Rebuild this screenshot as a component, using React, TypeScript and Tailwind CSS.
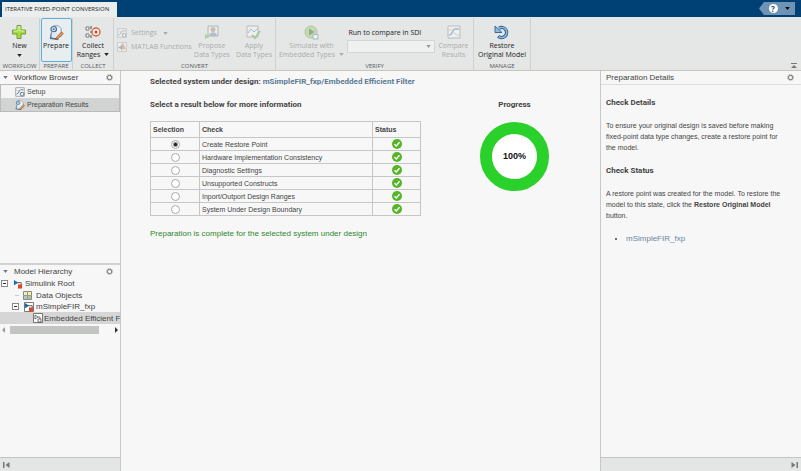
import { useState, type ReactNode } from "react";

const ribbonFont = "font-['Open_Sans','Liberation_Sans',sans-serif]";
const headingFont = "font-['Roboto','Liberation_Sans',sans-serif] font-bold";

function Caret({ className = "" }: { className?: string }) {
  return (
    <svg viewBox="0 0 6 4" className={`h-[3px] w-[5px] shrink-0 ${className}`} aria-hidden="true">
      <path d="M0 0h6L3 4z" fill="currentColor" />
    </svg>
  );
}

function PlusIcon() {
  return (
    <svg viewBox="0 0 14 14" className="size-[14px]" aria-hidden="true">
      <path d="M5 .5h4V5h4.500v4H9v4.500H5V9H.5V5H5z" fill="#a5dc3c" stroke="#6a8f3a" strokeWidth=".9" />
      <path d="M6 1.500h2V6h4.500M6 1.500V6H1.500" fill="none" stroke="#dcf5a4" strokeWidth="1" />
    </svg>
  );
}

function PrepareIcon({ className = "size-[15px]" }: { className?: string }) {
  return (
    <svg viewBox="0 0 16 16" className={className} aria-hidden="true">
      <path d="M5 .8h5l3 3V12H5z" fill="#e9f0f6" stroke="#7d93a8" strokeWidth=".9" />
      <circle cx="5" cy="4.500" r="2.900" fill="#dce8f2" stroke="#47709a" strokeWidth="1.300" />
      <circle cx="5" cy="4.500" r="1" fill="#47709a" />
      <path d="M3 8l-1 6 8 1" fill="none" stroke="#47709a" strokeWidth="2" />
      <path d="M3 8l-.5 5 7 1.500 1-5-4-2z" fill="#dfe9f1" />
      <path d="M7.500 13.800l5.800-6.300 2 1.700-5.800 5.500-2.500.8z" fill="#eda24a" stroke="#8a4a2c" strokeWidth=".8" />
    </svg>
  );
}

function CollectIcon() {
  return (
    <svg viewBox="0 0 16 14" className="h-[14px] w-4" aria-hidden="true">
      <path d="M1 2h3v3H1zM1 9h3v3H1z" fill="#fff" stroke="#777" />
      <path d="M6 1v3M6 6v2M6 10v3" stroke="#666" strokeWidth="1.2" />
      <circle cx="11" cy="7" r="4" fill="#fdf3ec" stroke="#d4683a" strokeWidth="1.4" />
      <circle cx="11" cy="7" r="1.5" fill="#b8502a" />
    </svg>
  );
}

function WaveIcon({ className = "size-[14px]", gear = false }: { className?: string; gear?: boolean }) {
  return (
    <svg viewBox="0 0 14 14" className={className} aria-hidden="true">
      <path d="M1 1h12v12H1z" fill="#fafafa" stroke="#858b90" />
      <path d="M2 10c4 0 3-6 6-6h4" fill="none" stroke="#4f7ea6" strokeWidth="1.3" />
      <path d="M2 5h3l4 5h4" fill="none" stroke="#b09a86" strokeWidth=".8" />
      {gear && <circle cx="10" cy="10" r="2.6" fill="#e8eef3" stroke="#5c7386" strokeWidth="1.3" />}
    </svg>
  );
}

function MatlabIcon() {
  return (
    <svg viewBox="0 0 12 12" className="size-[10px]" aria-hidden="true">
      <path d="M.5.5h11v11H.5z" fill="#f4f4f4" stroke="#999" />
      <path d="M1 7l3-2 3-4-1 8-2-1z" fill="#4b7fae" />
      <path d="M7 1l4 8-3-1-3 3z" fill="#df7b32" />
    </svg>
  );
}

function ProposeIcon() {
  return (
    <svg viewBox="0 0 15 15" className="size-[15px]" aria-hidden="true">
      <path d="M4 1h10v10H4z" fill="#f6f6f6" stroke="#777" />
      <circle cx="9" cy="4.500" r="2.500" fill="#a78c78" />
      <path d="M5 11c0-5 8-5 8 0z" fill="#7c90a4" />
      <path d="M1 14V9l5 2.500z" fill="#6fb83a" />
    </svg>
  );
}

function ApplyIcon() {
  return (
    <svg viewBox="0 0 15 15" className="size-[15px]" aria-hidden="true">
      <path d="M1 1h11v11H1z" fill="#f8f8f8" stroke="#888" />
      <path d="M2 8l3-4 3 3 4-4" fill="none" stroke="#5d88ac" />
      <path d="M6 10l3 3 5-7" fill="none" stroke="#68a63a" strokeWidth="2" />
    </svg>
  );
}

function SimulateIcon() {
  return (
    <svg viewBox="0 0 15 15" className="size-[15px]" aria-hidden="true">
      <circle cx="7" cy="7" r="6" fill="#9fd06a" stroke="#6c9a46" />
      <path d="M5 3.500v7L10.500 7z" fill="#3f5a2e" />
      <path d="M9 9.500h5v4.500H9z" fill="#fff" stroke="#5f7f9a" />
    </svg>
  );
}

function RestoreIcon() {
  return (
    <svg viewBox="0 0 16 16" className="size-4" aria-hidden="true">
      <path d="M5 4.200a5 5 0 1 1-.8 8" fill="none" stroke="#2f5f8e" strokeWidth="3.400" />
      <path d="M1 2v6.500h7z" fill="#8fbce0" stroke="#2f5f8e" strokeWidth=".9" />
      <path d="M4.400 4.700a5 5 0 1 1 .4 7.900" fill="none" stroke="#8fbce0" strokeWidth="1.600" />
    </svg>
  );
}

function ModelIcon({ boxed = false }: { boxed?: boolean }) {
  return (
    <svg viewBox="0 0 11 11" className="size-[10px] shrink-0" aria-hidden="true">
      {boxed && <path d="M.5.5h10v10H.5z" fill="#fff" stroke="#666" />}
      <path d="M1 1l5 3-5 3z" fill="#1b6fa8" />
      <path d="M5 4h4v3" fill="none" stroke="#555" />
      <path d="M5.500 6h4.500v4.500H5.500z" fill="#d8492a" />
    </svg>
  );
}

function DataObjectsIcon() {
  return (
    <svg viewBox="0 0 9 9" className="size-[9px] shrink-0" aria-hidden="true">
      <path d="M.5.5h8v8h-8z" fill="#f3f0a8" stroke="#888" />
      <path d="M5 5h3v3H5z" fill="#a9c98a" />
      <path d="M1 5h3v3H1z" fill="#a9c4dc" />
      <path d="M4.500 0v9M0 4.500h9" stroke="#999" />
    </svg>
  );
}

function SubsystemIcon() {
  return (
    <svg viewBox="0 0 10 10" className="size-[10px] shrink-0" aria-hidden="true">
      <path d="M.5.5h9v9h-9z" fill="#fff" stroke="#777" />
      <path d="M2 2l3 2-3 2z" fill="none" stroke="#555" strokeWidth=".8" />
      <path d="M5 4h2v2M5 6h3v3H5z" fill="none" stroke="#555" strokeWidth=".8" />
    </svg>
  );
}

function CheckMark() {
  return (
    <svg viewBox="0 0 10 10" className="mx-auto block size-[10px]" role="img" aria-label="Passed">
      <circle cx="5" cy="5" r="5" fill="#55b526" />
      <path d="M2.500 5.200l1.800 1.800 3.200-3.800" fill="none" stroke="#fff" strokeWidth="1.400" />
    </svg>
  );
}

function Section({ title, className = "", children }: { title: string; className?: string; children: ReactNode }) {
  return (
    <section className={`flex shrink-0 flex-col border-r border-[#cfd1d1] ${className}`}>
      <div className="flex flex-1 items-start justify-center">{children}</div>
      <h2 className="text-center text-[6px] leading-[8px] text-[#55595c]">{title}</h2>
    </section>
  );
}

type ToolProps = { icon: ReactNode; lines: string[]; menu?: boolean; disabled?: boolean; active?: boolean; className?: string };

function Tool({ icon, lines, menu, disabled, active, className = "" }: ToolProps) {
  const split = menu && lines.length === 1;
  return (
    <button
      type="button"
      disabled={disabled}
      className={`flex h-11 flex-col items-center rounded-[2px] border pt-1 text-[7px] leading-[9px] whitespace-nowrap ${
        active ? "border-[#5aaee0] bg-[#e8eeef]" : "border-transparent"
      } ${disabled ? "text-[#a9acac]" : "text-[#222]"} ${className}`}
    >
      <span className={`flex h-[18px] items-center ${disabled ? "opacity-45" : ""}`}>{icon}</span>
      {lines.map((line, i) => (
        <span key={line} className="flex items-center gap-1">
          {line}
          {menu && !split && i === lines.length - 1 && <Caret />}
        </span>
      ))}
      {split && <Caret className="mt-1" />}
    </button>
  );
}

function GearButton({ label }: { label: string }) {
  return (
    <button type="button" aria-label={label} className="ml-auto">
      <svg viewBox="0 0 8 8" className="size-[7px]" aria-hidden="true">
        <circle cx="4" cy="4" r="2.500" fill="#fff" stroke="#8a8a8a" strokeWidth="1.400" />
        <circle cx="4" cy="4" r="3.600" fill="none" stroke="#999" strokeWidth=".8" strokeDasharray="1.400 1.400" />
      </svg>
    </button>
  );
}

function PanelHeader({ title }: { title: string }) {
  return (
    <div className="flex h-[13px] items-center pr-[7px] pl-[3px] text-[#777]">
      <Caret />
      <h2 className="ml-1.5 text-[#444]">{title}</h2>
      <GearButton label={`${title} options`} />
    </div>
  );
}

function Toggle({ label }: { label: string }) {
  return (
    <button
      type="button"
      aria-label={label}
      className="flex size-[7px] shrink-0 items-center justify-center border border-[#888] bg-white"
    >
      <span className="h-px w-[3px] bg-[#333]" />
    </button>
  );
}

function Arrow({ left = false, bar = false }: { left?: boolean; bar?: boolean }) {
  return (
    <svg viewBox="0 0 7 6" className={`h-[6px] w-[7px] ${left ? "" : "rotate-180"}`} aria-hidden="true">
      <path d={bar ? "M0 0h1.500v6H0zM6.500 0v6L2.500 3z" : "M5 0v6L2 3z"} fill="currentColor" />
    </svg>
  );
}

const checks = [
  "Create Restore Point",
  "Hardware Implementation Consistency",
  "Diagnostic Settings",
  "Unsupported Constructs",
  "Inport/Outport Design Ranges",
  "System Under Design Boundary",
];

export default function App() {
  const [selected, setSelected] = useState(0);

  return (
    <div className="flex min-h-screen flex-col bg-[#f7f7f7] font-['Liberation_Sans',Arial,sans-serif] text-[8px] leading-[11px] text-[#444]">
      <header className={`flex h-[17px] items-end justify-between bg-[#004175] ${ribbonFont}`}>
        <h1 className="ml-0.5 flex h-[15px] w-[115px] items-center bg-[#eceeee] pl-[3px] text-[6px] whitespace-nowrap text-[#222]">
          ITERATIVE FIXED-POINT CONVERSION
        </h1>
        <button
          type="button"
          aria-label="Help"
          className="mr-1.5 mb-0.5 flex h-[13px] w-9 items-center justify-center gap-[7px] bg-[#6f93b4] pl-1 text-black [clip-path:polygon(5px_0,100%_0,100%_100%,5px_100%,0_50%)]"
        >
          <span className="flex size-[9px] items-center justify-center rounded-full bg-white text-[8px] font-bold text-[#1d4f7c]">
            ?
          </span>
          <Caret />
        </button>
      </header>

      <div className={`flex h-[54px] border-b border-[#c9c4bc] bg-[#e5e7e7] pt-px ${ribbonFont}`}>
        <Section title="WORKFLOW" className="w-10">
          <Tool icon={<PlusIcon />} lines={["New"]} menu />
        </Section>
        <Section title="PREPARE" className="w-[33px]">
          <Tool icon={<PrepareIcon />} lines={["Prepare"]} active className="w-[31px]" />
        </Section>
        <Section title="COLLECT" className="w-[41px]">
          <Tool icon={<CollectIcon />} lines={["Collect", "Ranges"]} menu />
        </Section>
        <Section title="CONVERT" className="w-[162px]">
          <div className="mr-auto flex flex-col gap-1 pt-2.5 pl-[3px] leading-[10px] text-[7px] text-[#a9acac]">
            <button type="button" disabled className="flex items-center gap-1">
              <span className="opacity-45">
                <WaveIcon className="size-[10px]" gear />
              </span>
              Settings
              <Caret className="ml-0.5" />
            </button>
            <button type="button" disabled className="flex items-center gap-1 whitespace-nowrap">
              <span className="opacity-45">
                <MatlabIcon />
              </span>
              MATLAB Functions
            </button>
          </div>
          <Tool icon={<ProposeIcon />} lines={["Propose", "Data Types"]} disabled />
          <Tool icon={<ApplyIcon />} lines={["Apply", "Data Types"]} disabled className="mr-0.5 ml-1" />
        </Section>
        <Section title="VERIFY" className="w-[198px]">
          <Tool icon={<SimulateIcon />} lines={["Simulate with", "Embedded Types"]} menu disabled className="w-[70px]" />
          <div className="flex w-[88px] flex-col gap-0.5 pt-2.5">
            <label htmlFor="sdi" className="px-0.5 text-[7px] leading-[10px] text-[#222]">
              Run to compare in SDI
            </label>
            <div className="relative">
              <select
                id="sdi"
                disabled
                className="block h-[13px] w-full appearance-none border border-[#d3d5d5] bg-[#eff0f0]"
              >
                <option aria-label="None" />
              </select>
              <Caret className="pointer-events-none absolute top-[5px] right-1 text-[#999]" />
            </div>
          </div>
          <Tool icon={<WaveIcon />} lines={["Compare", "Results"]} disabled className="w-[38px]" />
        </Section>
        <Section title="MANAGE" className="w-[57px]">
          <Tool icon={<RestoreIcon />} lines={["Restore", "Original Model"]} />
        </Section>
        <button type="button" aria-label="Collapse toolstrip" className="mt-auto mr-1 mb-px ml-auto text-[#777]">
          <svg viewBox="0 0 6 6" className="size-[6px]" aria-hidden="true">
            <path d="M0 0h6v1H0zM3 2l3 3H0z" fill="currentColor" />
          </svg>
        </button>
      </div>

      <div className="flex flex-1">
        <aside className="flex w-[121px] shrink-0 flex-col border-r border-[#c8c8c8]">
          <div className="flex flex-1 flex-col">
            <PanelHeader title="Workflow Browser" />
            <nav className="border border-[#bbb] text-[7px]">
              <a href="#setup" className="flex h-[13px] items-center gap-0.5 bg-[#f4f4f4] pl-3.5">
                <WaveIcon className="size-[10px]" gear />
                Setup
              </a>
              <a href="#results" className="flex h-[13px] items-center gap-0.5 bg-[#d2d4d3] pl-3.5">
                <PrepareIcon className="size-[10px]" />
                Preparation Results
              </a>
            </nav>
          </div>
          <div className="flex h-[194px] flex-col border-t-2 border-[#d2d2d2]">
            <PanelHeader title="Model Hierarchy" />
            <ul className="whitespace-nowrap">
              <li className="flex h-[11px] items-center gap-[3px] pl-px">
                <Toggle label="Collapse Simulink Root" />
                <span className="ml-0.5 flex items-center gap-0.5">
                  <ModelIcon />
                  Simulink Root
                </span>
              </li>
              <li className="flex h-3 items-center pl-[15px]">
                <span className="mr-1 h-px w-1 bg-[#ccc]" />
                <DataObjectsIcon />
                <span className="ml-1">Data Objects</span>
              </li>
              <li className="flex h-[11px] items-center gap-[3px] pl-3">
                <Toggle label="Collapse mSimpleFIR_fxp" />
                <span className="ml-0.5 flex items-center gap-0.5">
                  <ModelIcon boxed />
                  mSimpleFIR_fxp
                </span>
              </li>
              <li className="flex h-3 items-center gap-px bg-[#d6d6d6] pl-[33px]">
                <SubsystemIcon />
                Embedded Efficient F
              </li>
            </ul>
            <div className="mt-0.5 flex h-2 items-center text-[#333]">
              <button type="button" aria-label="Scroll left" className="text-[#999]">
                <Arrow left />
              </button>
              <div className="ml-[3px] h-2 flex-1 bg-[#c3c5c2]" />
              <button type="button" aria-label="Scroll right" className="ml-3.5">
                <Arrow />
              </button>
            </div>
          </div>
          <div className="flex h-3.5 items-center border-t border-[#c4c4c4] bg-[#e4e6e5] pl-[3px] text-[#777]">
            <button type="button" aria-label="Collapse left panel">
              <Arrow left bar />
            </button>
          </div>
        </aside>

        <main className="flex flex-1 items-start pl-[29px]">
          <div className="w-[271px] shrink-0">
            <p className={`mt-[5px] whitespace-nowrap ${headingFont}`}>
              Selected system under design:{" "}
              <a href="#filter" className="text-[#5a7a94]">
                mSimpleFIR_fxp/Embedded Efficient Filter
              </a>
            </p>
            <h2 className={`mt-3 ${headingFont}`}>Select a result below for more information</h2>
            <table className="mt-[11px] w-full table-fixed border-collapse border border-[#b5b5b5] text-[7px]">
              <thead>
                <tr className="h-4 text-left">
                  <th className="w-[49px] border border-[#c6c6c6] px-0.5">Selection</th>
                  <th className="border border-[#c6c6c6] px-0.5">Check</th>
                  <th className="w-12 border border-[#c6c6c6] px-0.5">Status</th>
                </tr>
              </thead>
              <tbody>
                {checks.map((name, i) => (
                  <tr key={name} className="h-[13px]">
                    <td className="border border-[#c6c6c6] p-0">
                      <input
                        type="radio"
                        id={`check-${i}`}
                        name="check"
                        checked={selected === i}
                        onChange={() => setSelected(i)}
                        className="mx-auto block size-[9px] appearance-none rounded-full border border-[#aaa] bg-white checked:bg-[radial-gradient(circle,#222_1px,#fff_3px)]"
                      />
                    </td>
                    <td className="border border-[#c6c6c6] px-0.5 py-0">
                      <label htmlFor={`check-${i}`}>{name}</label>
                    </td>
                    <td className="border border-[#c6c6c6] p-0">
                      <CheckMark />
                    </td>
                  </tr>
                ))}
              </tbody>
            </table>
            <p className="mt-3 text-[#2c8a2c]">Preparation is complete for the selected system under design</p>
          </div>
          <div className="mt-7 ml-[59px] flex flex-col items-center gap-3">
            <h2 className={headingFont}>Progress</h2>
            <div className="flex size-[69px] items-center justify-center rounded-full border-[12px] border-[#2bd12b] bg-white text-[9px] font-bold text-[#111]">
              100%
            </div>
          </div>
        </main>

        <aside className="flex w-[201px] shrink-0 flex-col border-l border-[#c8c8c8]">
          <div className="flex h-[14px] items-center border-b border-[#dcdede] pr-[7px] pl-[5px]">
            <h2>Preparation Details</h2>
            <GearButton label="Preparation Details options" />
          </div>
          <div className="flex flex-1 flex-col gap-3 pt-3 pl-[5px]">
            <h3 className={headingFont}>Check Details</h3>
            <p className="max-w-[180px] text-[7px]">
              To ensure your original design is saved before making fixed-point data type changes, create a restore point
              for the model.
            </p>
            <h3 className={headingFont}>Check Status</h3>
            <p className="max-w-[180px] text-[7px]">
              A restore point was created for the model. To restore the model to this state, click the{" "}
              <b>Restore Original Model</b> button.
            </p>
            <ul className="list-disc pl-5">
              <li>
                <a href="#model" className="text-[#6b859c]">
                  mSimpleFIR_fxp
                </a>
              </li>
            </ul>
          </div>
          <div className="flex h-3.5 items-center justify-end border-t border-[#c4c4c4] bg-[#e4e6e5] pr-[3px] text-[#777]">
            <button type="button" aria-label="Collapse right panel">
              <Arrow bar />
            </button>
          </div>
        </aside>
      </div>
    </div>
  );
}
